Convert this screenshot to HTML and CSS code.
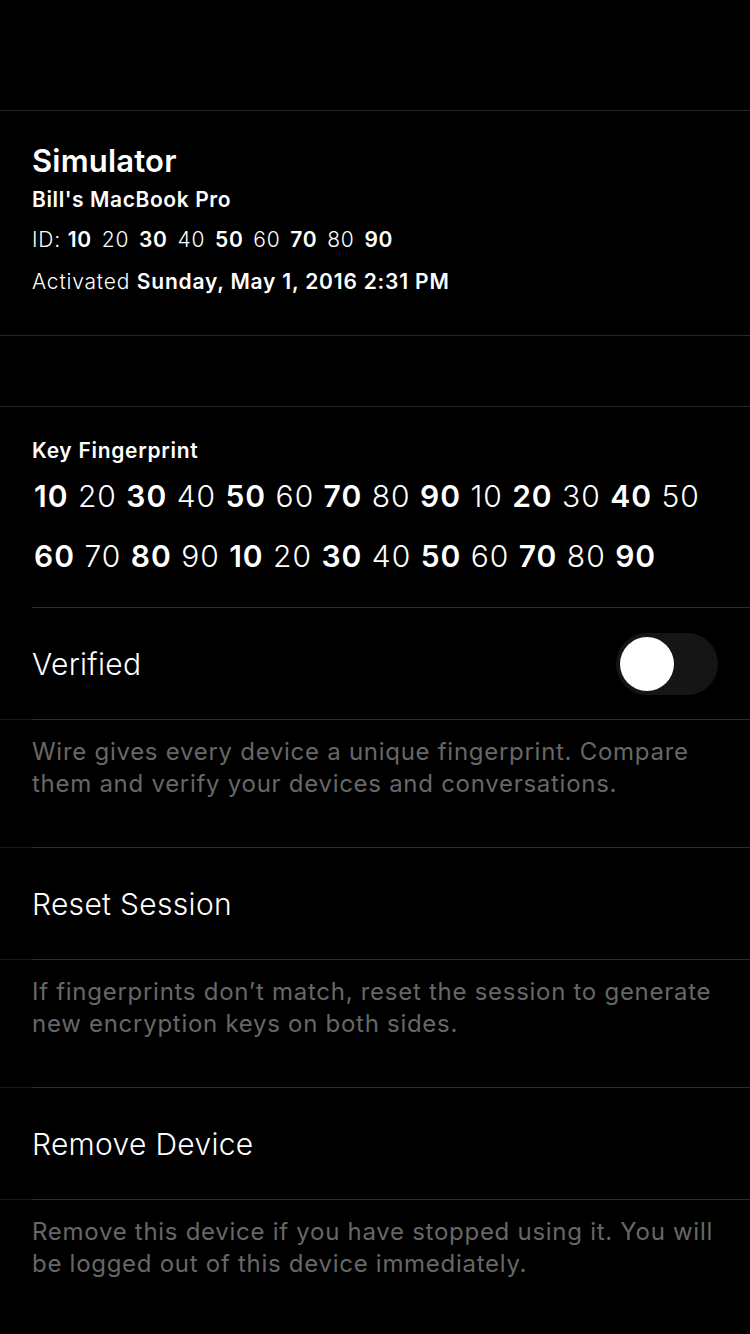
FILE: index.html
```html
<!DOCTYPE html>
<html>
<head>
<meta charset="utf-8">
<link rel="stylesheet" href="styles.css">
</head>
<body>
<div class="screen">
  <div class="top-space"></div>
  <div class="sep"></div>
  <section class="device">
    <div class="title">Simulator</div>
    <div class="name">Bill's MacBook Pro</div>
    <div class="id">ID: <b>10</b> <span>20</span> <b>30</b> <span>40</span> <b>50</b> <span>60</span> <b>70</b> <span>80</span> <b>90</b></div>
    <div class="activated">Activated <b>Sunday, May 1, 2016 2:31 PM</b></div>
  </section>
  <div class="sep"></div>
  <div class="gap"></div>
  <div class="sep"></div>
  <section class="fingerprint">
    <div class="fp-label">Key Fingerprint</div>
    <div class="fp-line"><b>10</b> <span>20</span> <b>30</b> <span>40</span> <b>50</b> <span>60</span> <b>70</b> <span>80</span> <b>90</b> <span>10</span> <b>20</b> <span>30</span> <b>40</b> <span>50</span></div>
    <div class="fp-line"><b>60</b> <span>70</span> <b>80</b> <span>90</span> <b>10</b> <span>20</span> <b>30</b> <span>40</span> <b>50</b> <span>60</span> <b>70</b> <span>80</span> <b>90</b></div>
  </section>
  <div class="sep inset"></div>
  <div class="row">
    <span class="row-label">Verified</span>
    <div class="toggle"><div class="knob"></div></div>
  </div>
  <div class="sep two"></div>
  <div class="footer">Wire gives every device a unique fingerprint. Compare them and verify your devices and conversations.</div>
  <div class="sep two"></div>
  <div class="row">
    <span class="row-label">Reset Session</span>
  </div>
  <div class="sep two"></div>
  <div class="footer">If fingerprints don’t match, reset the session to generate new encryption keys on both sides.</div>
  <div class="sep two"></div>
  <div class="row">
    <span class="row-label">Remove Device</span>
  </div>
  <div class="sep two"></div>
  <div class="footer">Remove this device if you have stopped using it. You will be logged out of this device immediately.</div>
</div>
</body>
</html>
```
FILE: styles.css
```css
html, body {
  margin: 0;
  padding: 0;
  background: #000;
}
body {
  font-family: Inter, "Noto Sans", "Liberation Sans", sans-serif;
  color: #fff;
}
.screen {
  width: 750px;
  height: 1334px;
  overflow: hidden;
  background: #000;
}
.top-space { height: 110px; }
.sep { height: 1px; background: #262626; }
.sep.inset { margin-left: 32px; background: #2c2c2c; }
.sep.two { background: linear-gradient(to right, #191919 0 32px, #2c2c2c 32px); }
.gap { height: 70px; }

.device {
  height: 224px;
  box-sizing: border-box;
  padding: 30px 32px 0;
}
.title {
  font-size: 31px;
  font-weight: 600;
  line-height: 40px;
  letter-spacing: 0.2px;
}
.name {
  font-size: 21px;
  font-weight: 600;
  line-height: 38px;
  letter-spacing: 0.6px;
}
.id, .activated {
  font-size: 21px;
  font-weight: 300;
  line-height: 42px;
  letter-spacing: 0.8px;
}
.id b, .activated b { font-weight: 600; }
.id b, .id span { margin-right: 3px; }

.fingerprint {
  height: 200px;
  box-sizing: border-box;
  padding: 29px 32px 0;
}
.fp-label {
  font-size: 21px;
  font-weight: 600;
  line-height: 30px;
  letter-spacing: 0.7px;
}
.fp-line {
  font-size: 30px;
  line-height: 60px;
  font-weight: 300;
  white-space: nowrap;
  letter-spacing: 1px;
  padding-left: 2px;
}
.fp-line b { font-weight: 600; }

.row {
  height: 111px;
  display: flex;
  align-items: center;
  justify-content: space-between;
  padding: 0 32px;
}
.row-label {
  font-size: 30px;
  font-weight: 300;
  letter-spacing: 0.3px;
}
.toggle {
  width: 102px;
  height: 62px;
  border-radius: 31px;
  background: #151515;
  display: flex;
  align-items: center;
  padding-left: 4px;
  box-sizing: border-box;
}
.knob {
  width: 54px;
  height: 54px;
  border-radius: 50%;
  background: #fff;
}

.footer {
  height: 127px;
  box-sizing: border-box;
  padding: 16px 32px 0;
  font-size: 24px;
  line-height: 32px;
  color: #676767;
  font-weight: 400;
  letter-spacing: 0.72px;
}
```
